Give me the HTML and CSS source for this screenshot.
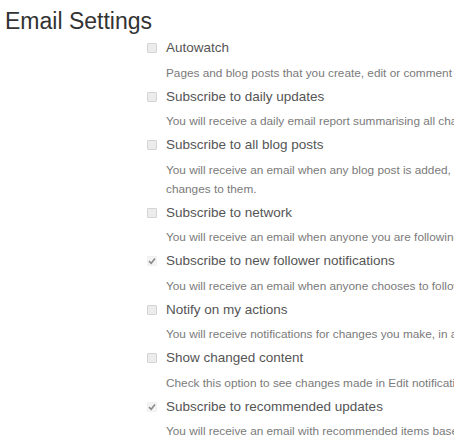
FILE: index.html
```html
<!DOCTYPE html>
<html>
<head>
<meta charset="utf-8">
<link rel="stylesheet" href="styles.css">
</head>
<body>
<div class="page">
  <h1 class="title">Email Settings</h1>
  <ul class="options">
    <li class="option">
      <span class="box"></span>
      <div class="text">
        <div class="label">Autowatch</div>
        <div class="desc">Pages and blog posts that you create, edit or comment on will be watched automatically.</div>
      </div>
    </li>
    <li class="option">
      <span class="box"></span>
      <div class="text">
        <div class="label">Subscribe to daily updates</div>
        <div class="desc">You will receive a daily email report summarising all changes.</div>
      </div>
    </li>
    <li class="option">
      <span class="box"></span>
      <div class="text">
        <div class="label">Subscribe to all blog posts</div>
        <div class="desc wrap">You will receive an email when any blog post is added, edited or</div>
        <div class="desc">changes to them.</div>
      </div>
    </li>
    <li class="option">
      <span class="box"></span>
      <div class="text">
        <div class="label">Subscribe to network</div>
        <div class="desc">You will receive an email when anyone you are following makes changes.</div>
      </div>
    </li>
    <li class="option">
      <span class="box checked"><svg viewBox="0 0 10 10" width="10" height="10"><path d="M2 5.2 L4.2 7.3 L8 2.6" fill="none" stroke="#8a8a8a" stroke-width="1.6"/></svg></span>
      <div class="text">
        <div class="label">Subscribe to new follower notifications</div>
        <div class="desc">You will receive an email when anyone chooses to follow you.</div>
      </div>
    </li>
    <li class="option">
      <span class="box"></span>
      <div class="text">
        <div class="label">Notify on my actions</div>
        <div class="desc">You will receive notifications for changes you make, in addition to others.</div>
      </div>
    </li>
    <li class="option">
      <span class="box"></span>
      <div class="text">
        <div class="label">Show changed content</div>
        <div class="desc">Check this option to see changes made in Edit notifications.</div>
      </div>
    </li>
    <li class="option">
      <span class="box checked"><svg viewBox="0 0 10 10" width="10" height="10"><path d="M2 5.2 L4.2 7.3 L8 2.6" fill="none" stroke="#8a8a8a" stroke-width="1.6"/></svg></span>
      <div class="text">
        <div class="label">Subscribe to recommended updates</div>
        <div class="desc">You will receive an email with recommended items based on your activity.</div>
      </div>
    </li>
  </ul>
</div>
</body>
</html>
```

FILE: styles.css
```css
html, body {
  margin: 0;
  padding: 0;
  background: #ffffff;
  overflow: hidden;
}
.page {
  width: 454px;
  height: 442px;
  overflow: hidden;
  font-family: "Liberation Sans", Arial, sans-serif;
  padding: 0 0 0 5px;
  box-sizing: border-box;
}
.title {
  margin: 0;
  padding-top: 8px;
  font-size: 23px;
  font-weight: normal;
  line-height: 26px;
  color: #333333;
}
.options {
  list-style: none;
  margin: 4px 0 0 142px;
  padding: 0;
  white-space: nowrap;
}
.option {
  display: flex;
  gap: 9px;
  align-items: flex-start;
  margin-bottom: 4px;
}
.box {
  flex: none;
  width: 8px;
  height: 8px;
  margin-top: 5px;
  border: 1px solid #d4d4d4;
  background: #ececec;
  border-radius: 1px;
  position: relative;
}
.box.checked {
  border-color: #f0f0f0;
  background: #f4f4f4;
}
.box svg {
  position: absolute;
  left: -1px;
  top: -1px;
}
.text {
  display: flex;
  flex-direction: column;
}
.label {
  font-size: 13.5px;
  line-height: 20px;
  color: #555555;
  margin-bottom: 5.5px;
}
.desc {
  font-size: 11.8px;
  line-height: 19px;
  color: #7a7a7a;
}
```
